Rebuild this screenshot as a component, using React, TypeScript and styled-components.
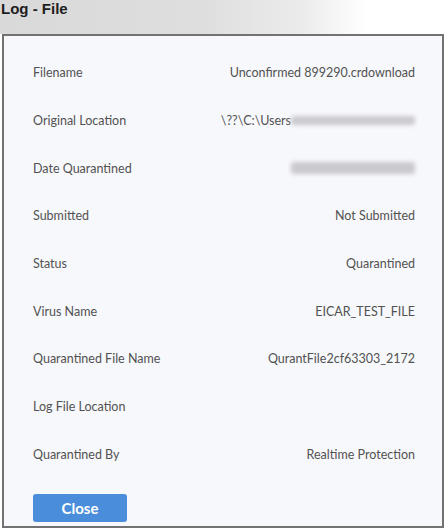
import styled, { createGlobalStyle } from 'styled-components'

const GlobalStyle = createGlobalStyle`
  html, body {
    margin: 0;
    padding: 0;
    background: #ffffff;
  }
  body {
    font-family: Lato, "Open Sans", sans-serif;
  }
`

const rows = [
  {label: 'Filename', value: 'Unconfirmed 899290.crdownload'},
  {label: 'Original Location', value: '\\??\\C:\\Users', blur: 124},
  {label: 'Date Quarantined', blur: 124, tall: true},
  {label: 'Submitted', value: 'Not Submitted'},
  {label: 'Status', value: 'Quarantined'},
  {label: 'Virus Name', value: 'EICAR_TEST_FILE'},
  {label: 'Quarantined File Name', value: 'QurantFile2cf63303_2172'},
  {label: 'Log File Location'},
  {label: 'Quarantined By', value: 'Realtime Protection'},
]


export default function App() {
  return (
    <Root>
      <GlobalStyle />
      <Header>
        <Title>Log - File</Title>
      </Header>

      <Panel>
        <List>
          {rows.map(row =>
            <Row key={row.label}>
              <Label>{row.label}</Label>
              <Value>
                {row.value}
                {row.blur && <Redacted $width={row.blur} $tall={row.tall} />}
              </Value>
            </Row>
          )}
        </List>

        <Footer>
          <CloseButton type="button">Close</CloseButton>
        </Footer>
      </Panel>
    </Root>
  )
}

const Root = styled.div`
  width: 447px;
  height: 530px;
  display: flex;
  flex-direction: column;
  background: #fff;
`

const Header = styled.div`
  height: 34px;
  flex-shrink: 0;
  display: flex;
  align-items: flex-start;
  background: linear-gradient(90deg, #d9d9d9 0%, #dedede 45%, #ececec 68%, #ffffff 82%, #ffffff 100%);
`

const Title = styled.div`
  padding: 0 0 0 1px;
  font-family: "Liberation Sans", Arial, sans-serif;
  font-weight: bold;
  font-size: 15px;
  color: #1e1e1e;
`

const Panel = styled.div`
  margin: 0 3px 2px 2px;
  flex: 1;
  display: flex;
  flex-direction: column;
  border: 2px solid #727272;
  background: #f7f8fb;
  padding: 13px 27px 0 29px;
`

const List = styled.div`
  display: flex;
  flex-direction: column;
`

const Row = styled.div`
  height: 47.7px;
  display: flex;
  align-items: center;
  justify-content: space-between;
  font-size: 12.5px;
  color: #525252;
`

const Label = styled.span`
  white-space: nowrap;
`

const Value = styled.span`
  display: flex;
  align-items: center;
  white-space: nowrap;
`

const Redacted = styled.span<{$width: number, $tall?: boolean}>`
  display: inline-block;
  width: ${p => p.$width}px;
  height: ${p => p.$tall ? 12 : 9}px;
  background: #c9c9ce;
  border-radius: 3px;
  filter: blur(2px);
`

const Footer = styled.div`
  padding-top: 16px;
`

const CloseButton = styled.button`
  width: 94px;
  height: 28px;
  border: none;
  border-radius: 3px;
  background: #4a8edb;
  color: #fff;
  font-family: Lato, sans-serif;
  font-weight: bold;
  font-size: 15px;
  cursor: pointer;
`
